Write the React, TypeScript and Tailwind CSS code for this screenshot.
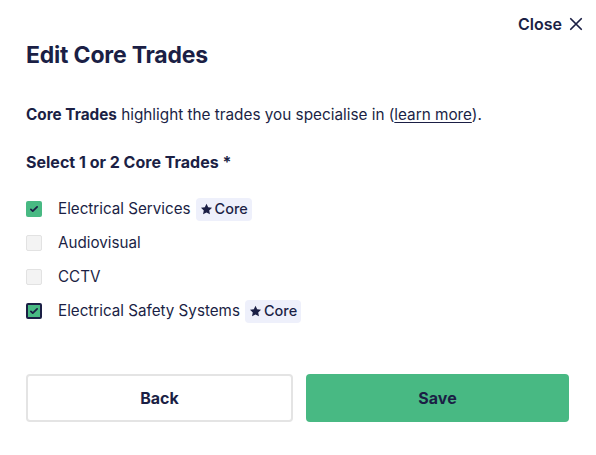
import React from "react";

const Check = () => (
  <svg viewBox="0 0 16 16" className="w-[10px] h-[10px]" fill="none">
    <path d="M3 8.5l3 3 7-7" stroke="#1b1f45" strokeWidth="2.8" strokeLinecap="round" strokeLinejoin="round" />
  </svg>
);

const Star = () => (
  <svg viewBox="0 0 24 24" className="w-[13px] h-[13px]" fill="#1b1f45">
    <path d="M12 1.5l3.1 6.5 7.1.9-5.2 4.9 1.4 7.1L12 17.4l-6.4 3.5 1.4-7.1-5.2-4.9 7.1-.9z" />
  </svg>
);

const Badge = () => (
  <span className="ml-[5px] inline-flex items-center gap-[2px] rounded-[4px] bg-[#eef0fb] px-[4px] h-[23px] text-[14.5px] font-medium text-[#1b1f45]">
    <Star />
    Core
  </span>
);

type Item = { label: string; checked: boolean; focus?: boolean; core?: boolean };
const items: Item[] = [
  { label: "Electrical Services", checked: true, core: true },
  { label: "Audiovisual", checked: false },
  { label: "CCTV", checked: false },
  { label: "Electrical Safety Systems", checked: true, focus: true, core: true },
];

export default function App() {
  return (
    <div className="w-[596px] h-[455px] bg-white text-[#1b1f45]" style={{ fontFamily: "Inter, 'Noto Sans', sans-serif" }}>
      <div className="flex justify-end pt-[12px] pr-[13px]">
        <button className="flex items-center gap-[7px] text-[16px] font-semibold text-[#1b1f45]">
          Close
          <svg viewBox="0 0 16 16" className="w-[14px] h-[14px]" fill="none">
            <path d="M2 2l12 12M14 2L2 14" stroke="#1b1f45" strokeWidth="2" strokeLinecap="round" />
          </svg>
        </button>
      </div>
      <div className="pl-[26px] pr-[27px]">
        <h1 className="mt-[4px] text-[23px] leading-[30px] font-bold tracking-[-0.2px]">Edit Core Trades</h1>
        <p className="mt-[34px] text-[15.3px] leading-[22px]">
          <span className="font-bold">Core Trades</span> highlight the trades you specialise in (
          <span className="underline underline-offset-2 decoration-[1px]">learn more</span>).
        </p>
        <div className="mt-[25px] text-[16px] leading-[22px] font-bold">Select 1 or 2 Core Trades *</div>
        <div className="mt-[24px] flex flex-col gap-[10px]">
          {items.map((it) => (
            <div key={it.label} className="flex items-center h-[24px]">
              <span
                className={
                  it.checked
                    ? it.focus
                      ? "flex items-center justify-center w-[16px] h-[16px] rounded-[2px] bg-[#48b983] border-2 border-[#1b1f45]"
                      : "flex items-center justify-center w-[16px] h-[16px] rounded-[2px] bg-[#48b983]"
                    : "w-[16px] h-[16px] rounded-[2px] bg-[#f3f3f3] border border-[#e2e2e2]"
                }
              >
                {it.checked && <Check />}
              </span>
              <span className="ml-[16px] text-[15.2px]">{it.label}</span>
              {it.core && <Badge />}
            </div>
          ))}
        </div>
        <div className="mt-[51px] flex gap-[13px]">
          <button className="flex-1 h-[48px] rounded-[4px] border-2 border-[#e4e4e4] bg-white text-[16px] font-bold">Back</button>
          <button className="flex-1 h-[48px] rounded-[4px] bg-[#48b983] text-[16px] font-bold">Save</button>
        </div>
      </div>
    </div>
  );
}
